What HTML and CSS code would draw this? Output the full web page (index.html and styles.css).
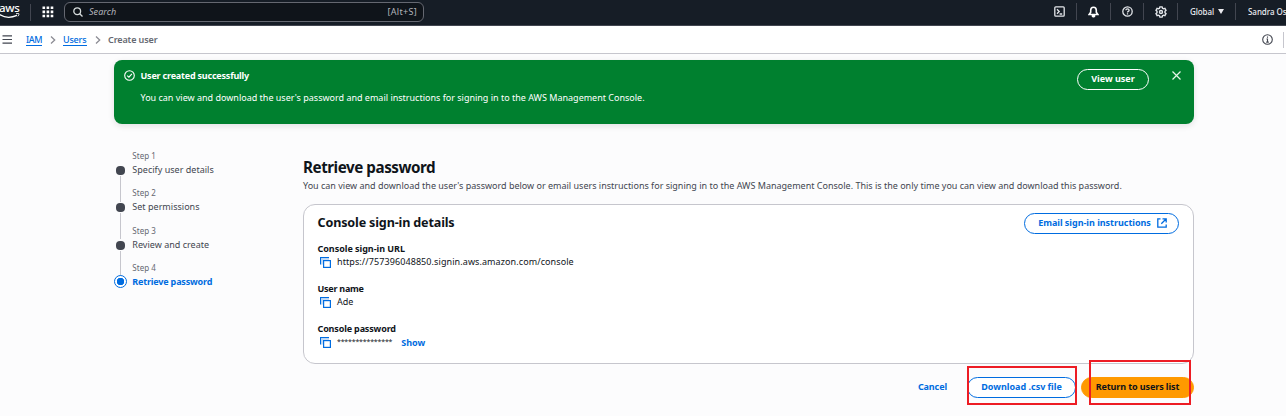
FILE: index.html
```
<!DOCTYPE html>
<html lang="en">
<head>
<meta charset="utf-8">
<title>Create user | IAM</title>
<link rel="stylesheet" href="styles.css">
</head>
<body>
<header class="topbar">
  <div class="aws"><span class="aws-word">aws</span>
    <svg class="smile" width="22" height="6" viewBox="0 0 22 6"><path d="M0 1.200C5 4.600 12 5 18 2.400" fill="none" stroke="#fff" stroke-width="1.300"/><path d="M17 .8c1.200-.4 2.600-.4 2.900-.1.200.5-.2 1.700-1 2.600" fill="none" stroke="#fff" stroke-width="1"/></svg>
  </div>
  <i class="sep sep-logo"></i>
  <svg class="grid-icon" width="12" height="12" viewBox="0 0 12 12" fill="#fff"><path d="M.5.5h2.600v2.600H.5zM4.600.5h2.600v2.600H4.600zM8.700.5h2.600v2.600H8.700zM.5 4.600h2.600v2.600H.5zM4.600 4.600h2.600v2.600H4.600zM8.700 4.600h2.600v2.600H8.700zM.5 8.700h2.600v2.600H.5zM4.600 8.700h2.600v2.600H4.600zM8.700 8.700h2.600v2.600H8.700z"/></svg>
  <div class="search">
    <svg width="10" height="10" viewBox="0 0 10 10" fill="none" stroke="#d5dbdb" stroke-width="1.300"><circle cx="4.200" cy="4.200" r="3.400"/><path d="M6.700 6.700 9.500 9.500"/></svg>
    <em>Search</em><kbd>[Alt+S]</kbd>
  </div>
  <nav class="tools">
    <div class="tool t1"><svg width="11" height="11" viewBox="0 0 11 11" fill="none" stroke="#e3e6ea" stroke-width="1.300"><rect x=".8" y=".8" width="9.400" height="9.400" rx="1"/><path d="M3 3.200 5.200 5.500 3 7.800M5.600 8h2.600"/></svg></div>
    <div class="tool t2"><svg width="11" height="12" viewBox="0 0 11 12"><path d="M5.500 1.300c2 0 2.800 1.300 2.800 3v2l1.500 2.200H1.200l1.500-2.200v-2c0-1.700.8-3 2.800-3z" fill="none" stroke="#fff" stroke-width="1.600"/><path d="M3.700 9h3.600v1.200c0 .6-.8 1.300-1.800 1.300s-1.800-.7-1.800-1.300z" fill="#fff"/></svg></div>
    <div class="tool t3"><svg width="11" height="11" viewBox="0 0 11 11" fill="none" stroke="#e3e6ea" stroke-width="1.300"><circle cx="5.500" cy="5.500" r="4.700"/><path d="M3.900 4.300c0-2 3.200-2 3.200 0 0 1.200-1.600 1-1.600 2.200M5.500 7.300v1.200"/></svg></div>
    <div class="tool t4"><svg width="12" height="12" viewBox="0 0 12 12" fill="none" stroke="#e3e6ea"><path d="M4.900.9h2.200l.4 1.300 1 .6 1.400-.4 1.100 1.900-1 1v1.400l1 1-1.100 1.900-1.400-.4-1 .6-.4 1.300H4.900l-.4-1.300-1-.6-1.400.4L1 7.700l1-1V5.300l-1-1 1.100-1.900 1.400.4 1-.6z" stroke-width="1.400"/><circle cx="6" cy="6" r="1.500" stroke-width="1.400"/></svg></div>
    <div class="tool t5"><span>Global</span><b class="caret"></b></div>
    <div class="tool t6"><span>Sandra Ose</span></div>
  </nav>
</header>

<div class="crumbs">
  <svg class="menu" width="10" height="9" viewBox="0 0 10 9" stroke="#424650" stroke-width="1.200"><path d="M.5 .9h9.500M.5 4.500h9.500M.5 8.100h9.500"/></svg>
  <a class="c-iam">IAM</a>
  <svg class="chev" width="6" height="8" viewBox="0 0 6 8" fill="none" stroke="#8c8c94" stroke-width="1.300"><path d="M1 .5 4.700 4 1 7.500"/></svg>
  <a class="c-users">Users</a>
  <svg class="chev" width="6" height="8" viewBox="0 0 6 8" fill="none" stroke="#8c8c94" stroke-width="1.300"><path d="M1 .5 4.700 4 1 7.500"/></svg>
  <span class="c-now">Create user</span>
  <svg class="info" width="11" height="11" viewBox="0 0 11 11" fill="none" stroke="#424650" stroke-width="1.100"><circle cx="5.500" cy="5.500" r="4.800"/><path d="M5.500 2.500v1.300M4.500 5h1v3.200M4.200 8.100h2.600"/></svg>
  <i class="info-sep"></i>
</div>

<main class="page">
  <section class="banner">
    <svg class="ok" width="11" height="11" viewBox="0 0 11 11" fill="none" stroke="#fff" stroke-width="1.100"><circle cx="5.500" cy="5.500" r="4.800"/><path d="M3.200 5.600 4.900 7.200 7.900 3.800"/></svg>
    <div class="banner-text"><strong>User created successfully</strong><p>You can view and download the user's password and email instructions for signing in to the AWS Management Console.</p></div>
    <button class="btn view">View user</button>
    <svg class="close" width="9" height="9" viewBox="0 0 9 9" stroke="#e8f5ea" stroke-width="1.200"><path d="M.5.5 8.500 8.500M8.500.5.5 8.500"/></svg>
  </section>

  <div class="columns">
    <ol class="steps">
      <li><i class="dot"></i><small>Step 1</small><span class="s1">Specify user details</span></li>
      <li><i class="dot"></i><small>Step 2</small><span class="s2">Set permissions</span></li>
      <li><i class="dot"></i><small>Step 3</small><span class="s3">Review and create</span></li>
      <li class="active"><i class="dot"></i><small>Step 4</small><span class="s4">Retrieve password</span></li>
    </ol>
    <div class="content">
      <h1>Retrieve password</h1>
      <p class="desc">You can view and download the user's password below or email users instructions for signing in to the AWS Management Console. This is the only time you can view and download this password.</p>
      <section class="card">
        <div class="card-head"><h2>Console sign-in details</h2>
          <button class="btn email"><span>Email sign-in instructions</span><svg width="10" height="10" viewBox="0 0 10 10" fill="none" stroke="#006ce0" stroke-width="1.300"><path d="M3.500.8H.8v8.400h8.400V6.500M5.500.8h3.700v3.700M9 1 4.300 5.700"/></svg></button></div>
        <dl>
          <dt class="k1">Console sign-in URL</dt>
          <dd><svg class="copy" width="11" height="11" viewBox="0 0 11 11"><path d="M.6 7.500V.6h8.400" fill="none" stroke="#006ce0" stroke-width="1.200"/><path d="M1.200 1.200H9V2.800H2.800V7.500H1.200z" fill="#b5d4f6"/><rect x="3.600" y="3.600" width="6.800" height="6.800" fill="#fff" stroke="#006ce0" stroke-width="1.200"/></svg><span class="url">https://757396048850.signin.aws.amazon.com/console</span></dd>
          <dt class="k2">User name</dt>
          <dd><svg class="copy" width="11" height="11" viewBox="0 0 11 11"><path d="M.6 7.500V.6h8.400" fill="none" stroke="#006ce0" stroke-width="1.200"/><path d="M1.200 1.200H9V2.800H2.800V7.500H1.200z" fill="#b5d4f6"/><rect x="3.600" y="3.600" width="6.800" height="6.800" fill="#fff" stroke="#006ce0" stroke-width="1.200"/></svg><span class="ade">Ade</span></dd>
          <dt class="k3">Console password</dt>
          <dd><svg class="copy" width="11" height="11" viewBox="0 0 11 11"><path d="M.6 7.500V.6h8.400" fill="none" stroke="#006ce0" stroke-width="1.200"/><path d="M1.200 1.200H9V2.800H2.800V7.500H1.200z" fill="#b5d4f6"/><rect x="3.600" y="3.600" width="6.800" height="6.800" fill="#fff" stroke="#006ce0" stroke-width="1.200"/></svg><span class="stars">***************</span><a class="show">Show</a></dd>
        </dl>
      </section>
      <div class="actions">
        <a class="cancel">Cancel</a>
        <div class="wrap"><button class="btn csv">Download .csv file</button><i class="mark mark-csv"></i></div>
        <div class="wrap"><button class="btn ret">Return to users list</button><i class="mark mark-ret"></i></div>
      </div>
    </div>
  </div>
</main>
</body>
</html>
```
FILE: styles.css
```
* { box-sizing: border-box; margin: 0; padding: 0; }
body { width: 1286px; height: 416px; overflow: hidden; background: #fcfcfd; color: #0f141a; font: 9px/12px "Noto Sans", "Open Sans", sans-serif; }
svg { display: block; flex: none; }
span, a, em, kbd, h1, h2, dt, small, strong, p, button { white-space: nowrap; }

.topbar { display: flex; align-items: center; height: 26px; background: #161d26; border-bottom: 1px solid #424650; overflow: hidden; }
.aws { width: 20px; height: 25px; padding-top: 3px; flex: none; color: #fff; }
.aws-word { display: block; font-size: 11.5px; font-weight: 500; line-height: 10px; letter-spacing: -.3px; margin-left: -1px; }
.smile { margin-left: -1px; }
.sep { width: 1px; height: 17px; background: #424650; flex: none; }
.sep-logo { margin-left: 10px; }
.grid-icon { margin-left: 11px; margin-top: -2px; }
.search { display: flex; align-items: center; width: 360px; height: 20px; margin-left: 10px; margin-top: -1px; padding: 0 6px 0 8px; border: 1px solid #656871; border-radius: 6px; background: #0f141a; flex: none; }
.search em { margin-left: 6px; color: #b4b4bb; letter-spacing: .05px; }
.search kbd { margin-left: auto; font: inherit; color: #b4b4bb; letter-spacing: .3px; }
.tools { display: flex; margin-left: 621px; margin-top: -2px; align-items: center; color: #ebebf0; font-size: 8px; font-weight: 500; }
.tool { display: flex; align-items: center; height: 17px; flex: none; border-right: 1px solid #424650; }
.t1 { padding-left: 9px; width: 32px; }
.t2 { padding-left: 11px; width: 34px; }
.t3 { padding-left: 11px; width: 33px; }
.t4 { padding-left: 11px; width: 34px; }
.t5 { padding-left: 12px; width: 58px; }
.t6 { padding-left: 12px; border: 0; }
.t5 span { letter-spacing: -.1px; }
.t6 span { letter-spacing: -.05px; }
.caret { margin-left: 4px; border: 3px solid transparent; border-top: 5px solid #ebebf0; border-bottom: 0; }

.crumbs { display: flex; align-items: center; height: 28px; padding-left: 2px; background: #fff; border-bottom: 1px solid #c6c6cd; font-weight: 500; }
.crumbs a { color: #006ce0; border-bottom: 1px solid #006ce0; line-height: 11px; }
.c-iam { margin-left: 14px; width: 16px; letter-spacing: -.4px; }
.c-users { width: 24px; letter-spacing: -.2px; }
.chev { margin: 0 7px 0 8px; }
.c-now { color: #656871; font-weight: 600; letter-spacing: -.1px; }
.info { margin-left: auto; }
.info-sep { width: 1px; height: 16px; margin: 0 2px 0 10px; background: #c6c6cd; }

.page { width: 1080px; margin: 6px 0 0 114px; }
.banner { display: flex; align-items: flex-start; height: 64px; padding: 10px 13px 0 10px; border-radius: 8px; background: #00802f; color: #fff; box-shadow: 0 2px 6px #0007161c; }
.banner-text { margin-left: 5.5px; }
.banner-text strong { display: block; letter-spacing: -.2px; }
.banner-text p { margin-top: 10px; }
.btn { display: flex; align-items: center; justify-content: center; height: 21px; padding-bottom: 1px; border: 1px solid #006ce0; border-radius: 11px; background: #fff; color: #006ce0; font: bold 9px/12px "Noto Sans", sans-serif; flex: none; }
.view { width: 72px; margin: -1px 0 0 auto; border-color: #fff; background: none; color: #fff; }
.close { margin: 1px 0 0 23px; }

.columns { display: flex; margin-top: 26px; }
.steps { list-style: none; width: 189px; flex: none; }
.steps li { position: relative; height: 37.3px; padding-left: 18.3px; color: #424650; }
.steps small { display: block; font-size: 8px; line-height: 12px; letter-spacing: .05px; color: #656871; }
.steps span { display: block; line-height: 12px; margin-top: 2px; letter-spacing: .02px; }
.steps li:not(:last-child)::after { content: ""; position: absolute; left: 6px; top: 26px; width: 1px; height: 26px; background: #c6c6cd; }
.dot { position: absolute; left: 2px; top: 16px; width: 9px; height: 9px; border-radius: 4px; background: #424650; }
.active .dot { left: 0; top: 13px; width: 13px; height: 13px; border: 1.5px solid #006ce0; border-radius: 50%; background: radial-gradient(circle, #006ce0 3.5px, #fff 4px); }
.steps .active span { color: #006ce0; font-weight: 700; letter-spacing: -.18px; }

.content { width: 891px; padding-top: 7px; }
h1 { font-size: 15.2px; font-weight: 700; line-height: 20px; letter-spacing: -.45px; }
.desc { margin-top: 3px; color: #424650; }
.card { height: 160px; margin-top: 12px; padding: 8px 14px 0 13.5px; border: 1px solid #c6c6cd; border-radius: 12px; background: #fff; }
.card-head { display: flex; justify-content: space-between; height: 21px; }
h2 { font-size: 12.6px; font-weight: 700; line-height: 20px; letter-spacing: -.16px; }
.email { width: 155px; gap: 6px; padding-left: 2px; letter-spacing: -.03px; }
dl { margin-top: 9px; }
dt { font-weight: 700; line-height: 12px; }
.k1 { letter-spacing: -.03px; }
.k2 { letter-spacing: -.25px; }
.k3 { letter-spacing: -.15px; }
dd { display: flex; align-items: center; height: 14px; margin-bottom: 14px; padding-left: 2.5px; }
.copy { margin-right: 6px; }
.url { letter-spacing: .09px; }
.stars { font-size: 7px; letter-spacing: -.17px; }
.show { position: relative; top: 1px; color: #006ce0; font-weight: 700; margin-left: 9px; }
.actions { display: flex; justify-content: flex-end; align-items: center; margin-top: 13px; }
.cancel { margin-right: 20px; padding-bottom: 1px; color: #006ce0; font-weight: 700; letter-spacing: -.1px; }
.wrap { position: relative; }
.csv { width: 109px; margin-right: 5px; }
.ret { width: 113px; border-color: #ff9900; background: #ff9900; color: #0f141a; letter-spacing: -.1px; }
.mark { position: absolute; border: 2px solid #ed1c24; }
.mark-csv { left: 0; top: -11px; width: 110px; height: 39px; }
.mark-ret { left: 8px; top: -17px; width: 102px; height: 45px; }
```
